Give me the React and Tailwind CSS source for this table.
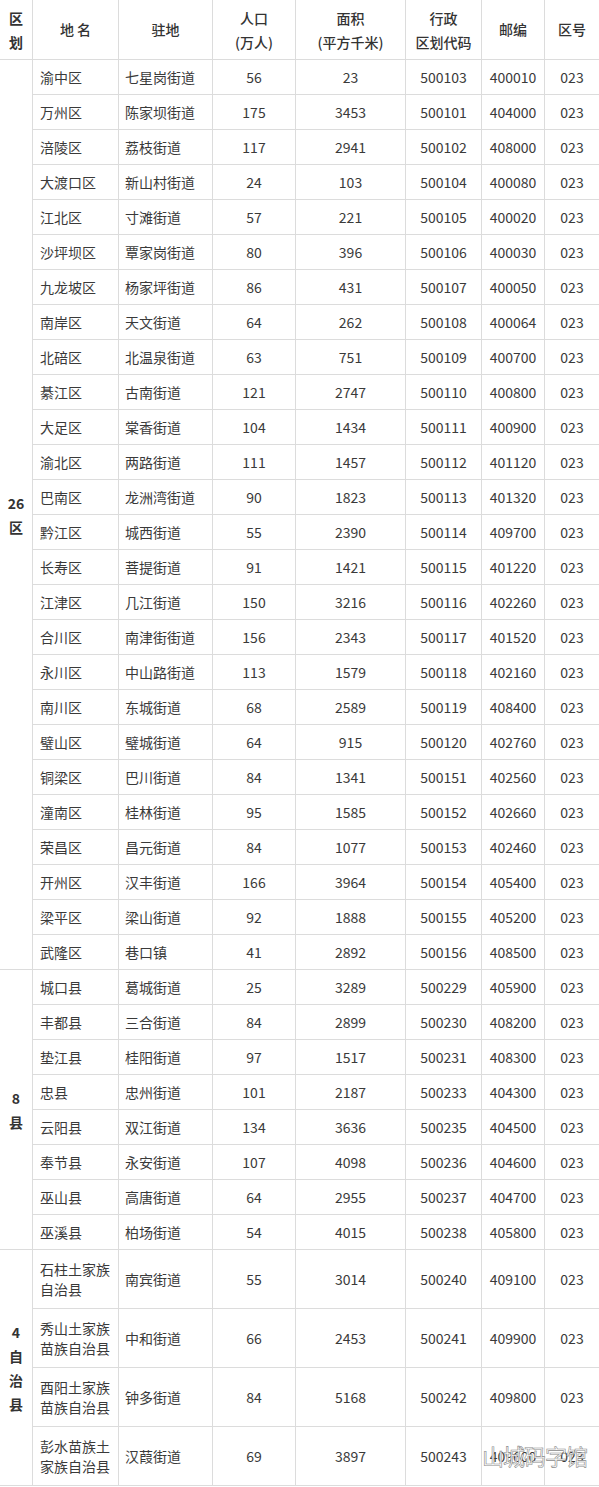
import React from "react";

const districts = [
  ["渝中区", "七星岗街道", "56", "23", "500103", "400010"],
  ["万州区", "陈家坝街道", "175", "3453", "500101", "404000"],
  ["涪陵区", "荔枝街道", "117", "2941", "500102", "408000"],
  ["大渡口区", "新山村街道", "24", "103", "500104", "400080"],
  ["江北区", "寸滩街道", "57", "221", "500105", "400020"],
  ["沙坪坝区", "覃家岗街道", "80", "396", "500106", "400030"],
  ["九龙坡区", "杨家坪街道", "86", "431", "500107", "400050"],
  ["南岸区", "天文街道", "64", "262", "500108", "400064"],
  ["北碚区", "北温泉街道", "63", "751", "500109", "400700"],
  ["綦江区", "古南街道", "121", "2747", "500110", "400800"],
  ["大足区", "棠香街道", "104", "1434", "500111", "400900"],
  ["渝北区", "两路街道", "111", "1457", "500112", "401120"],
  ["巴南区", "龙洲湾街道", "90", "1823", "500113", "401320"],
  ["黔江区", "城西街道", "55", "2390", "500114", "409700"],
  ["长寿区", "菩提街道", "91", "1421", "500115", "401220"],
  ["江津区", "几江街道", "150", "3216", "500116", "402260"],
  ["合川区", "南津街街道", "156", "2343", "500117", "401520"],
  ["永川区", "中山路街道", "113", "1579", "500118", "402160"],
  ["南川区", "东城街道", "68", "2589", "500119", "408400"],
  ["璧山区", "璧城街道", "64", "915", "500120", "402760"],
  ["铜梁区", "巴川街道", "84", "1341", "500151", "402560"],
  ["潼南区", "桂林街道", "95", "1585", "500152", "402660"],
  ["荣昌区", "昌元街道", "84", "1077", "500153", "402460"],
  ["开州区", "汉丰街道", "166", "3964", "500154", "405400"],
  ["梁平区", "梁山街道", "92", "1888", "500155", "405200"],
  ["武隆区", "巷口镇", "41", "2892", "500156", "408500"],
];

const counties = [
  ["城口县", "葛城街道", "25", "3289", "500229", "405900"],
  ["丰都县", "三合街道", "84", "2899", "500230", "408200"],
  ["垫江县", "桂阳街道", "97", "1517", "500231", "408300"],
  ["忠县", "忠州街道", "101", "2187", "500233", "404300"],
  ["云阳县", "双江街道", "134", "3636", "500235", "404500"],
  ["奉节县", "永安街道", "107", "4098", "500236", "404600"],
  ["巫山县", "高唐街道", "64", "2955", "500237", "404700"],
  ["巫溪县", "柏场街道", "54", "4015", "500238", "405800"],
];

const autonomous = [
  [["石柱土家族", "自治县"], "南宾街道", "55", "3014", "500240", "409100"],
  [["秀山土家族", "苗族自治县"], "中和街道", "66", "2453", "500241", "409900"],
  [["酉阳土家族", "苗族自治县"], "钟多街道", "84", "5168", "500242", "409800"],
  [["彭水苗族土", "家族自治县"], "汉葭街道", "69", "3897", "500243", "409600"],
];

const cell = "border-r border-b border-[#dcdcdc] p-0 align-middle";
const last = "border-b border-[#dcdcdc] p-0 align-middle";

function Row({ r, h, first, label, span, tall }) {
  const [name, seat, pop, area, code, zip] = r;
  return (
    <tr>
      {first && (
        <td rowSpan={span} className={`${cell} text-center font-bold text-[#333] leading-[24px]`}>
          {label}
        </td>
      )}
      <td className={`${cell} ${h} pl-[7px] text-left ${tall ? "leading-[20px]" : ""}`}>
        {Array.isArray(name) ? (
          <>
            {name[0]}
            <br />
            {name[1]}
          </>
        ) : (
          name
        )}
      </td>
      <td className={`${cell} pl-[6px] text-left`}>{seat}</td>
      <td className={`${cell} text-center`}>{pop}</td>
      <td className={`${cell} text-center`}>{area}</td>
      <td className={`${cell} text-center`}>{code}</td>
      <td className={`${cell} text-center`}>{zip}</td>
      <td className={`${last} text-center`}>023</td>
    </tr>
  );
}

function Label({ parts }) {
  return (
    <div className="flex flex-col items-center">
      {parts.map((p, i) => (
        <span key={i}>{p}</span>
      ))}
    </div>
  );
}

export default function App() {
  return (
    <div
      className="relative w-[599px] bg-white text-[14px] text-[#3a3a3a]"
      style={{ fontFamily: '"Noto Sans CJK SC", "Noto Sans", sans-serif' }}
    >
      <table className="w-[599px] table-fixed border-separate border-spacing-0">
        <colgroup>
          <col className="w-[33px]" />
          <col className="w-[86px]" />
          <col className="w-[94px]" />
          <col className="w-[83px]" />
          <col className="w-[110px]" />
          <col className="w-[76px]" />
          <col className="w-[63px]" />
          <col className="w-[54px]" />
        </colgroup>
        <thead>
          <tr className="text-[#333]">
            <th className={`${cell} h-[60px] font-bold leading-[24px]`}>
              <Label parts={["区", "划"]} />
            </th>
            <th className={`${cell} font-medium`}>地 名</th>
            <th className={`${cell} font-medium`}>驻地</th>
            <th className={`${cell} font-medium leading-[24px]`}>
              人口
              <br />
              (万人)
            </th>
            <th className={`${cell} font-medium leading-[24px]`}>
              面积
              <br />
              (平方千米)
            </th>
            <th className={`${cell} font-medium leading-[24px]`}>
              行政
              <br />
              区划代码
            </th>
            <th className={`${cell} font-medium`}>邮编</th>
            <th className={`${last} font-medium`}>区号</th>
          </tr>
        </thead>
        <tbody>
          {districts.map((r, i) => (
            <Row
              key={r[0]}
              r={r}
              h="h-[35px]"
              first={i === 0}
              span={districts.length}
              label={<Label parts={["26", "区"]} />}
            />
          ))}
          {counties.map((r, i) => (
            <Row
              key={r[0]}
              r={r}
              h="h-[35px]"
              first={i === 0}
              span={counties.length}
              label={<Label parts={["8", "县"]} />}
            />
          ))}
          {autonomous.map((r, i) => (
            <Row
              key={r[4]}
              r={r}
              h="h-[59px]"
              tall
              first={i === 0}
              span={autonomous.length}
              label={<Label parts={["4", "自", "治", "县"]} />}
            />
          ))}
        </tbody>
      </table>
      <div className="pointer-events-none absolute left-[482px] top-[1441px] text-[22px] leading-[28px] tracking-[-1px] text-white [-webkit-text-stroke:0.6px_#8a8a8a]">
        山城码字馆
      </div>
    </div>
  );
}
